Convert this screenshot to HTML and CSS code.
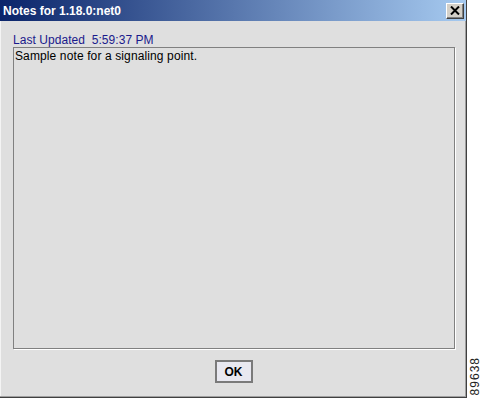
FILE: index.html
```html
<!DOCTYPE html>
<html lang="en">
<head>
    <meta charset="UTF-8">
    <title>Notes for 1.18.0:net0</title>
    <link rel="stylesheet" href="styles.css">
</head>
<body>
    <div class="page">
        <div class="window">
            <div class="titlebar">
                <span class="title">Notes for 1.18.0:net0</span>
                <button class="close-btn" aria-label="Close">
                    <svg width="10" height="9" viewBox="0 0 10 9">
                        <path d="M1 0.5 L9 8.5 M9 0.5 L1 8.5" stroke="#000" stroke-width="2"/>
                    </svg>
                </button>
            </div>
            <div class="content">
                <div class="updated">Last Updated&nbsp; 5:59:37 PM</div>
                <div class="note-area">Sample note for a signaling point.</div>
                <div class="buttons">
                    <button class="ok-btn">OK</button>
                </div>
            </div>
        </div>
        <div class="side">
            <span class="figure-id">89638</span>
        </div>
    </div>
</body>
</html>
```

FILE: styles.css
```css
body {
    margin: 0; padding: 0; background: #fff; font-family: "Liberation Sans", Arial, sans-serif;
}
.page {
    display: flex; width: 482px; height: 399px;
}
.window {
    width: 466px; height: 397px; background: #dfdfdf; display: flex; flex-direction: column;
    border-right: 1px solid #404040; border-bottom: 1px solid #404040;
    box-shadow: inset -1px -1px 0 #a0a0a0, inset 1px 1px 0 #f4f4f4;
}

/* Title bar */
.titlebar {
    height: 21px; background: linear-gradient(to right, #0a246a, #a6caf0);
    display: flex; align-items: center; justify-content: space-between; padding: 0 2px 0 3px;
}
.title {
    color: #fff; font-weight: bold; font-size: 12px;
}
.close-btn {
    width: 18px; height: 16px; padding: 0; background: #d4d0c8; display: flex; align-items: center; justify-content: center;
    border: 1px solid; border-color: #fff #404040 #404040 #fff; box-shadow: inset -1px -1px 0 #808080;
}

/* Body */
.content {
    flex: 1; display: flex; flex-direction: column; padding: 12px 11px 14px 13px;
}
.updated {
    color: #1a1a8c; font-size: 12px; line-height: 14px; letter-spacing: 0.05px;
}
.note-area {
    flex: 1; border: 1px solid #808080; box-shadow: 1px 1px 0 #fff;
    font-size: 12px; color: #000; padding: 1px 1px; line-height: 14px; letter-spacing: 0.12px;
}
.buttons {
    display: flex; justify-content: center; padding-top: 11px; margin-right: 1px;
}
.ok-btn {
    width: 38px; height: 23px; padding: 0; border: 2px solid #7a7a7a; background: #e8e8f0;
    font-family: "Liberation Sans", Arial, sans-serif; font-weight: bold; font-size: 12px; color: #000;
}

/* Figure label */
.side {
    flex: 1; display: flex; align-items: flex-end; justify-content: center; padding-bottom: 4px;
}
.figure-id {
    writing-mode: vertical-rl; transform: rotate(180deg); font-size: 12px; color: #222; letter-spacing: 1px;
}
```
